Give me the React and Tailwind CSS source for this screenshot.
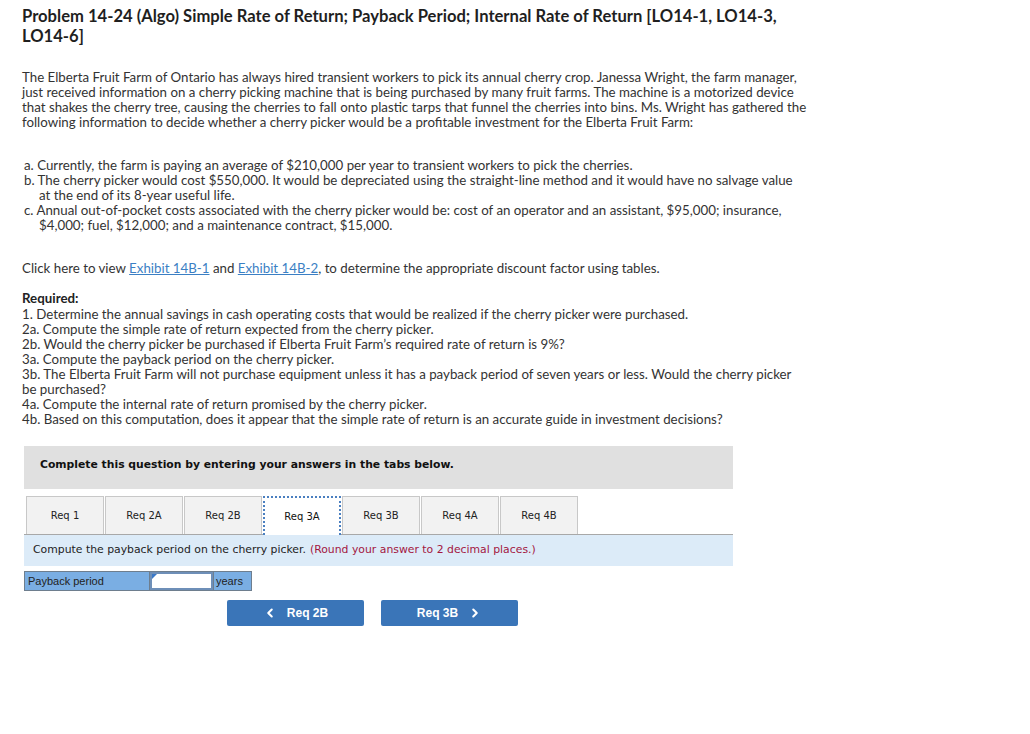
import { ChevronLeft, ChevronRight } from 'lucide-react';

const body = { fontFamily: 'Lato, "Open Sans", sans-serif' };
const verdana = { fontFamily: '"DejaVu Sans", Verdana, sans-serif' };
const arial = { fontFamily: '"Liberation Sans", Arial, sans-serif' };

const tabs = ['Req 1', 'Req 2A', 'Req 2B', 'Req 3A', 'Req 3B', 'Req 4A', 'Req 4B'];

const App = () => {
    return (
        <div className="min-h-screen bg-white text-[#333] pt-[6px] pl-[22px]" style={body}>
            <h1 className="text-[16.6px] leading-[20px] font-bold text-[#1f1f1f] w-[820px]">
                Problem 14-24 (Algo) Simple Rate of Return; Payback Period; Internal Rate of Return [LO14-1, LO14-3,
                <br />
                LO14-6]
            </h1>

            <p className="mt-[24px] text-[13.3px] leading-[15px] w-[820px]">
                The Elberta Fruit Farm of Ontario has always hired transient workers to pick its annual cherry crop. Janessa Wright, the farm manager,
                <br />
                just received information on a cherry picking machine that is being purchased by many fruit farms. The machine is a motorized device
                <br />
                that shakes the cherry tree, causing the cherries to fall onto plastic tarps that funnel the cherries into bins. Ms. Wright has gathered the
                <br />
                following information to decide whether a cherry picker would be a profitable investment for the Elberta Fruit Farm:
            </p>

            <div className="mt-[28px] ml-[2px] text-[13.3px] leading-[15px] w-[820px]">
                <p className="pl-[15px] -indent-[15px]">a. Currently, the farm is paying an average of $210,000 per year to transient workers to pick the cherries.</p>
                <p className="pl-[15px] -indent-[15px]">
                    b. The cherry picker would cost $550,000. It would be depreciated using the straight-line method and it would have no salvage value
                    <br />
                    at the end of its 8-year useful life.
                </p>
                <p className="pl-[15px] -indent-[15px]">
                    c. Annual out-of-pocket costs associated with the cherry picker would be: cost of an operator and an assistant, $95,000; insurance,
                    <br />
                    $4,000; fuel, $12,000; and a maintenance contract, $15,000.
                </p>
            </div>

            <p className="mt-[28px] text-[13.3px] leading-[15px]">
                Click here to view <span className="text-[#3b7fc4] underline">Exhibit 14B-1</span> and{' '}
                <span className="text-[#3b7fc4] underline">Exhibit 14B-2</span>, to determine the appropriate discount factor using tables.
            </p>

            <div className="mt-[15px] text-[13.3px] leading-[15px] w-[820px]">
                <p className="font-bold text-[#222] mb-[1px]">Required:</p>
                <p>1. Determine the annual savings in cash operating costs that would be realized if the cherry picker were purchased.</p>
                <p>2a. Compute the simple rate of return expected from the cherry picker.</p>
                <p>2b. Would the cherry picker be purchased if Elberta Fruit Farm’s required rate of return is 9%?</p>
                <p>3a. Compute the payback period on the cherry picker.</p>
                <p>
                    3b. The Elberta Fruit Farm will not purchase equipment unless it has a payback period of seven years or less. Would the cherry picker
                    <br />
                    be purchased?
                </p>
                <p>4a. Compute the internal rate of return promised by the cherry picker.</p>
                <p>4b. Based on this computation, does it appear that the simple rate of return is an accurate guide in investment decisions?</p>
            </div>

            <div className="ml-[2px] w-[709px] mt-[19px]">
                <div className="h-[43px] bg-[#e0e0e0] pl-[16px] pt-[11px]" style={verdana}>
                    <p className="text-[10.8px] leading-[16px] font-bold text-[#111]">
                        Complete this question by entering your answers in the tabs below.
                    </p>
                </div>

                <div className="mt-[7px] flex gap-[1px] pl-[2px] border-b border-[#a8a8a8]" style={verdana}>
                    {tabs.map((t) => (
                        <div
                            key={t}
                            className={
                                t === 'Req 3A'
                                    ? 'w-[78px] h-[39px] -mb-px flex items-center justify-center bg-white border-2 border-b-0 border-dotted border-[#4a7fc0] text-[10px] text-[#111]'
                                    : 'w-[78px] h-[38px] flex items-center justify-center bg-[#f2f2f2] border border-b-0 border-[#c8c8c8] text-[10px] text-[#222]'
                            }
                        >
                            {t}
                        </div>
                    ))}
                </div>

                <div className="h-[31px] bg-[#dcebf8] pl-[9px] flex items-center text-[10.85px]" style={verdana}>
                    <span className="text-[#222]">Compute the payback period on the cherry picker.</span>
                    <span className="ml-[4px] text-[#a3163f]">(Round your answer to 2 decimal places.)</span>
                </div>

                <div className="mt-[5px] flex w-[228px] h-[20px] border border-[#6e7e8e] text-[11px] text-[#222]" style={arial}>
                    <div className="w-[125px] bg-[#7aaee3] pl-[3px] flex items-center border-r border-[#6e7e8e]">Payback period</div>
                    <div className="relative w-[63px] bg-white border-2 border-[#6e8fb8]">
                        <span className="absolute left-0 top-0 w-0 h-0 border-t-[5px] border-r-[5px] border-t-[#3a78c8] border-r-transparent" />
                    </div>
                    <div className="flex-1 bg-[#7aaee3] pl-[2px] flex items-center border-l border-[#6e7e8e]">years</div>
                </div>

                <div className="mt-[9px] ml-[203px] flex gap-[17px]" style={arial}>
                    <button className="w-[137px] h-[26px] bg-[#3a75b8] rounded-[2px] text-white text-[12px] font-bold flex items-center justify-center gap-[10px]">
                        <ChevronLeft size={14} strokeWidth={3.5} />
                        <span>Req 2B</span>
                    </button>
                    <button className="w-[137px] h-[26px] bg-[#3a75b8] rounded-[2px] text-white text-[12px] font-bold flex items-center justify-center gap-[10px]">
                        <span>Req 3B</span>
                        <ChevronRight size={14} strokeWidth={3.5} />
                    </button>
                </div>
            </div>
        </div>
    );
};

export default App;
